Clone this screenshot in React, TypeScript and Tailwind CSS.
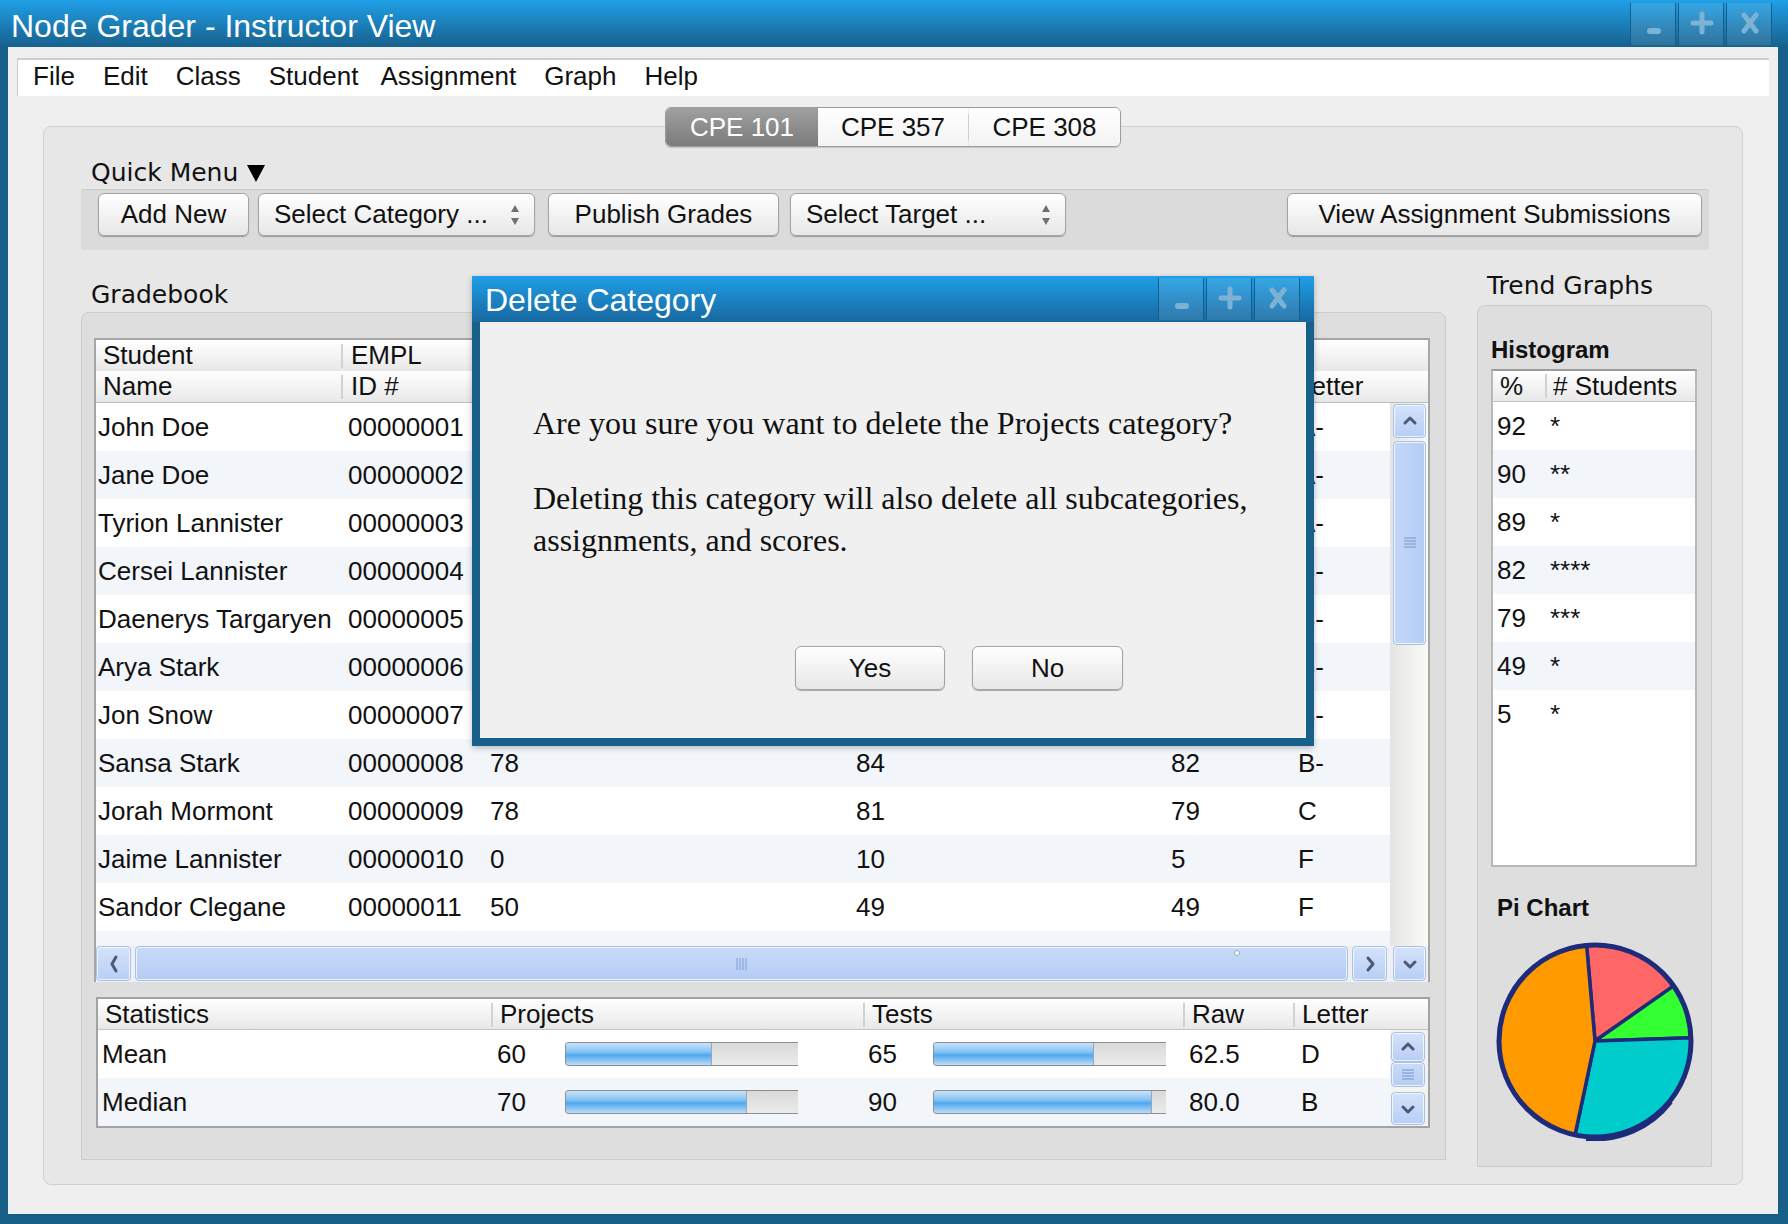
import type { ReactNode } from 'react'

// cells under the dialog are left blank; only name, id and letter show there
const STUDENTS = [
  ['John Doe', '00000001', '', '', '', 'A-'],
  ['Jane Doe', '00000002', '', '', '', 'A-'],
  ['Tyrion Lannister', '00000003', '', '', '', 'A-'],
  ['Cersei Lannister', '00000004', '', '', '', 'B-'],
  ['Daenerys Targaryen', '00000005', '', '', '', 'B-'],
  ['Arya Stark', '00000006', '', '', '', 'B-'],
  ['Jon Snow', '00000007', '', '', '', 'B-'],
  ['Sansa Stark', '00000008', '78', '84', '82', 'B-'],
  ['Jorah Mormont', '00000009', '78', '81', '79', 'C'],
  ['Jaime Lannister', '00000010', '0', '10', '5', 'F'],
  ['Sandor Clegane', '00000011', '50', '49', '49', 'F'],
]

const HISTOGRAM = [
  ['92', '*'],
  ['90', '**'],
  ['89', '*'],
  ['82', '****'],
  ['79', '***'],
  ['49', '*'],
  ['5', '*'],
]

const STATS = [
  { name: 'Mean', proj: '60', projPct: 63, test: '65', testPct: 69, raw: '62.5', letter: 'D' },
  { name: 'Median', proj: '70', projPct: 78, test: '90', testPct: 94, raw: '80.0', letter: 'B' },
]

function WinControls() {
  return (
    <div className="flex gap-[2px]">
      <div className="h-[42px] w-[46px] border-x border-[#155d8c] bg-white/10">
        <svg width="46" height="42" viewBox="0 0 46 42">
          <rect x="16" y="25" width="14" height="6" rx="3" fill="#7cb2d4" />
        </svg>
      </div>
      <div className="h-[42px] w-[46px] border-x border-[#155d8c] bg-white/10">
        <svg width="46" height="42" viewBox="0 0 46 42">
          <path d="M23 11 V29 M14 20 H32" stroke="#7cb2d4" strokeWidth="5" strokeLinecap="round" />
        </svg>
      </div>
      <div className="h-[42px] w-[46px] border-x border-[#155d8c] bg-white/10">
        <svg width="46" height="42" viewBox="0 0 46 42">
          <path d="M17 12 L29 28 M29 12 L17 28" stroke="#7cb2d4" strokeWidth="5" strokeLinecap="round" />
        </svg>
      </div>
    </div>
  )
}

function Btn({ children, className }: { children: ReactNode; className: string }) {
  return (
    <div
      className={`flex h-[43px] items-center justify-center rounded-[6px] border border-[#a3a3a3] bg-gradient-to-b from-white to-[#e7e7e7] text-[26px] shadow-[0_1px_1px_rgba(0,0,0,0.3)] ${className}`}
    >
      {children}
    </div>
  )
}

function SelectBox({ label, className }: { label: string; className: string }) {
  return (
    <div
      className={`flex h-[43px] items-center justify-between rounded-[6px] border border-[#a3a3a3] bg-gradient-to-b from-white to-[#e7e7e7] pl-[15px] pr-[14px] text-[26px] shadow-[0_1px_1px_rgba(0,0,0,0.3)] ${className}`}
    >
      <span>{label}</span>
      <svg width="10" height="22" viewBox="0 0 10 22">
        <path d="M5 1 L9 8 L1 8 Z M1 14 L9 14 L5 21 Z" fill="#707070" />
      </svg>
    </div>
  )
}

function ScrollBtn({ dir, className }: { dir: 'up' | 'down' | 'left' | 'right'; className: string }) {
  const paths = {
    up: 'M5 12 L10 7 L15 12',
    down: 'M5 8 L10 13 L15 8',
    left: 'M12 3 L8 10 L12 17',
    right: 'M8 4 L13 10 L8 16',
  }
  return (
    <div
      className={`flex items-center justify-center rounded-[4px] border border-[#a8c0ea] bg-gradient-to-b from-[#d4e3fb] to-[#b8cef5] shadow-[inset_0_0_0_1px_rgba(255,255,255,0.75)] ${className}`}
    >
      <svg width="20" height="20" viewBox="0 0 20 20">
        <path d={paths[dir]} fill="none" stroke="#4c5a78" strokeWidth="3" strokeLinecap="round" strokeLinejoin="round" />
      </svg>
    </div>
  )
}

function HeadSep() {
  return <span className="h-[24px] w-[2px] shrink-0 bg-[#d2d2d2]" />
}

function Bar({ pct }: { pct: number }) {
  return (
    <div className="flex h-[24px] w-[233px] overflow-hidden rounded-l-[4px] border-y border-l border-[#8f8f8f] bg-gradient-to-b from-[#d9d9d9] to-[#ebebeb]">
      <div
        className="h-full border-r border-[#9aa6b3] bg-[linear-gradient(to_bottom,#c6e1fb,#86c4f4_40%,#4ea8ee_55%,#bcdcfa)]"
        style={{ width: `${pct}%` }}
      />
    </div>
  )
}

function PieChart() {
  return (
    <svg width="200" height="200" viewBox="0 0 200 200">
      <path d="M100 100 L91.63 4.37 A96 96 0 0 1 178.64 44.94 Z" fill="#ff6666" stroke="#1e2b7a" strokeWidth="3.5" strokeLinejoin="round" />
      <path d="M100 100 L178.64 44.94 A96 96 0 0 1 195.94 96.65 Z" fill="#33ff33" stroke="#1e2b7a" strokeWidth="3.5" strokeLinejoin="round" />
      <path d="M100 100 L195.94 96.65 A96 96 0 0 1 80.04 193.9 Z" fill="#00cccc" stroke="#1e2b7a" strokeWidth="3.5" strokeLinejoin="round" />
      <path d="M100 100 L80.04 193.9 A96 96 0 0 1 91.63 4.37 Z" fill="#ff9900" stroke="#1e2b7a" strokeWidth="3.5" strokeLinejoin="round" />
      <circle cx="100" cy="100" r="96" fill="none" stroke="#1e2b7a" strokeWidth="5" />
      <path d="M175 160 A96 96 0 0 1 90 197" fill="none" stroke="#1e2b7a" strokeWidth="4" transform="translate(1 1)" />
    </svg>
  )
}

export default function App() {
  return (
    <div className="relative flex h-[1224px] w-[1788px] flex-col overflow-hidden bg-[#185f87] font-['Liberation_Sans',Arial,sans-serif] text-[#111]">
      {/* Title bar */}
      <div className="flex h-[47px] shrink-0 items-start bg-gradient-to-b from-[#1fa0e8] to-[#17618e]">
        <span className="pl-[11px] pt-[7px] text-[32px] leading-[38px] text-white">Node Grader - Instructor View</span>
        <div className="ml-auto mr-[16px] mt-[3px]">
          <WinControls />
        </div>
      </div>

      <div className="mb-[10px] ml-[8px] mr-[10px] flex flex-1 flex-col bg-[#efefef]">
        {/* Menu bar */}
        <div className="mx-[9px] mt-[11px] flex h-[38px] shrink-0 items-start gap-[28px] border-t-2 border-l border-[#cdcdcd] bg-white pl-[15px] text-[26px] leading-[32px]">
          <span>File</span>
          <span>Edit</span>
          <span>Class</span>
          <span>Student</span>
          <span className="-ml-[6px]">Assignment</span>
          <span>Graph</span>
          <span>Help</span>
        </div>

        {/* Class tabs */}
        <div className="relative z-10 mt-[11px] flex justify-center">
          <div className="flex h-[40px] overflow-hidden rounded-[6px] border border-[#9d9d9d] text-[26px] shadow-[0_1px_1px_rgba(0,0,0,0.15)]">
            <div className="flex w-[152px] items-center justify-center bg-gradient-to-b from-[#a0a0a0] to-[#7b7b7b] text-white">CPE 101</div>
            <div className="flex w-[150px] items-center justify-center bg-gradient-to-b from-white to-[#f3f3f3]">CPE 357</div>
            <div className="my-[6px] w-px bg-[#cfcfcf]" />
            <div className="flex w-[151px] items-center justify-center bg-gradient-to-b from-white to-[#f3f3f3]">CPE 308</div>
          </div>
        </div>

        {/* Tab panel */}
        <div className="mx-[35px] -mt-[21px] flex h-[1059px] flex-col rounded-[8px] border border-[#d0d0d0] bg-[#e7e7e7] pt-[30px]">
          <div className="ml-[47px] flex h-[32px] items-center gap-[9px] font-['DejaVu_Sans',sans-serif] text-[25px]">
            <span>Quick Menu</span>
            <svg width="18" height="18" viewBox="0 0 18 18">
              <path d="M0 1 H18 L9 18 Z" fill="#000" />
            </svg>
          </div>

          {/* Toolbar */}
          <div className="ml-[37px] mr-[33px] flex h-[61px] items-start rounded-[3px] border-t border-[#c8c8c8] bg-[#dbdbdb] pl-[17px] pr-[7px] pt-[3px]">
            <Btn className="w-[151px]">Add New</Btn>
            <SelectBox label="Select Category ..." className="ml-[9px] w-[277px]" />
            <Btn className="ml-[13px] w-[231px]">Publish Grades</Btn>
            <SelectBox label="Select Target ..." className="ml-[11px] w-[276px]" />
            <Btn className="ml-auto w-[415px]">View Assignment Submissions</Btn>
          </div>

          <div className="ml-[37px] mr-[30px] flex gap-[31px]">
            {/* Gradebook column */}
            <div className="flex w-[1365px] flex-col">
              <div className="mt-[29px] h-[32px] pl-[10px] font-['DejaVu_Sans',sans-serif] text-[25px] leading-[32px]">Gradebook</div>
              <div className="mt-[1px] flex h-[848px] flex-col rounded-t-[8px] border border-[#cbcbcb] bg-[#dedede] pl-[12px] pr-[15px] pt-[25px]">
                {/* Gradebook table */}
                <div className="flex flex-col border-x-2 border-t-2 border-[#a6a6a6] bg-white text-[26px]">
                  <div className="border-b border-[#bdbdbd]">
                    <div className="grid h-[31px] grid-cols-[245px_141px_366px_315px_127px_1fr] bg-gradient-to-b from-white to-[#e8e8e8] leading-[31px]">
                      <div className="pl-[7px]">Student</div>
                      <div className="flex items-center"><HeadSep /><span className="pl-[8px]">EMPL</span></div>
                      <div />
                      <div />
                      <div />
                      <div />
                    </div>
                    <div className="grid h-[31px] grid-cols-[245px_141px_366px_315px_127px_1fr] bg-gradient-to-b from-white to-[#e8e8e8] leading-[31px]">
                      <div className="pl-[7px]">Name</div>
                      <div className="flex items-center"><HeadSep /><span className="pl-[8px]">ID #</span></div>
                      <div />
                      <div />
                      <div />
                      <div className="flex items-center"><span className="pl-[7px]">Letter</span></div>
                    </div>
                  </div>
                  <div className="flex h-[543px]">
                    <div className="flex-1 overflow-hidden">
                      {STUDENTS.map((s, i) => (
                        <div
                          key={s[1]}
                          className={`grid h-[48px] grid-cols-[250px_142px_366px_315px_127px_1fr] items-center pl-[2px] ${i % 2 ? 'bg-[#f2f5fa]' : 'bg-white'}`}
                        >
                          {s.map((c, j) => (
                            <span key={j}>{c}</span>
                          ))}
                        </div>
                      ))}
                      <div className="h-[16px] bg-[#f2f5fa]" />
                    </div>
                    <div className="flex w-[38px] flex-col bg-gradient-to-r from-[#e4e4e4] to-[#fafaf5] pl-[3px] pr-[2px] pt-[1px]">
                      <ScrollBtn dir="up" className="h-[34px]" />
                      <div className="mt-[3px] flex h-[204px] items-center justify-center rounded-[4px] border border-[#a8c0ea] bg-gradient-to-r from-[#c3d7f8] to-[#b5cdf5] shadow-[inset_0_0_0_1px_rgba(255,255,255,0.75)]">
                        <svg width="14" height="14" viewBox="0 0 14 14">
                          <path d="M1 2 H13 M1 5 H13 M1 8 H13 M1 11 H13" stroke="#8fa9da" strokeWidth="1.3" />
                        </svg>
                      </div>
                    </div>
                  </div>
                  <div className="flex h-[36px] items-stretch bg-[#eef0f3] pb-[1px]">
                    <ScrollBtn dir="left" className="w-[35px]" />
                    <div className="relative ml-[4px] flex flex-1 items-center justify-center rounded-[4px] border border-[#a8c0ea] bg-gradient-to-b from-[#c9dbf9] to-[#b3cbf4] shadow-[inset_0_0_0_1px_rgba(255,255,255,0.75)]">
                      <svg width="14" height="14" viewBox="0 0 14 14">
                        <path d="M2 1 V13 M5 1 V13 M8 1 V13 M11 1 V13" stroke="#8fa9da" strokeWidth="1.3" />
                      </svg>
                      <span className="absolute left-[1098px] top-[3px] h-[6px] w-[6px] rounded-full border border-[#9aa7b8] bg-white" />
                    </div>
                    <ScrollBtn dir="right" className="ml-[4px] w-[35px]" />
                    <ScrollBtn dir="down" className="ml-[6px] mr-[2px] w-[33px]" />
                  </div>
                </div>

                {/* Statistics table */}
                <div className="ml-[2px] mt-[15px] flex flex-col border-2 border-[#a3a3a3] bg-white text-[26px]">
                  <div className="grid h-[31px] grid-cols-[393px_372px_320px_110px_1fr] border-b border-[#c4c4c4] bg-gradient-to-b from-white to-[#e8e8e8] leading-[31px]">
                    <div className="pl-[7px]">Statistics</div>
                    <div className="flex items-center"><HeadSep /><span className="pl-[7px]">Projects</span></div>
                    <div className="flex items-center"><HeadSep /><span className="pl-[7px]">Tests</span></div>
                    <div className="flex items-center"><HeadSep /><span className="pl-[7px]">Raw</span></div>
                    <div className="flex items-center"><HeadSep /><span className="pl-[7px]">Letter</span></div>
                  </div>
                  <div className="flex h-[96px]">
                    <div className="flex-1">
                      {STATS.map((r, i) => (
                        <div
                          key={r.name}
                          className={`grid h-[48px] grid-cols-[393px_372px_320px_110px_1fr] items-center ${i % 2 ? 'bg-[#f2f5fa]' : 'bg-white'}`}
                        >
                          <span className="pl-[4px]">{r.name}</span>
                          <div className="flex items-center">
                            <span className="w-[74px] pl-[6px]">{r.proj}</span>
                            <Bar pct={r.projPct} />
                          </div>
                          <div className="flex items-center">
                            <span className="w-[70px] pl-[5px]">{r.test}</span>
                            <Bar pct={r.testPct} />
                          </div>
                          <span className="pl-[6px]">{r.raw}</span>
                          <span className="pl-[8px]">{r.letter}</span>
                        </div>
                      ))}
                    </div>
                    <div className="flex w-[38px] flex-col bg-[#f3f3f0] pl-[1px] pr-[3px] pt-[2px]">
                      <ScrollBtn dir="up" className="h-[30px]" />
                      <div className="flex h-[25px] items-center justify-center rounded-[4px] border border-[#a8c0ea] bg-gradient-to-b from-[#c9dbf9] to-[#b5cdf5] shadow-[inset_0_0_0_1px_rgba(255,255,255,0.75)]">
                        <svg width="14" height="14" viewBox="0 0 14 14">
                          <path d="M1 2 H13 M1 5 H13 M1 8 H13 M1 11 H13" stroke="#8fa9da" strokeWidth="1.3" />
                        </svg>
                      </div>
                      <ScrollBtn dir="down" className="mt-[5px] h-[33px]" />
                    </div>
                  </div>
                </div>
              </div>
            </div>

            {/* Trend graphs column */}
            <div className="flex w-[235px] flex-col">
              <div className="mt-[20px] h-[32px] pl-[10px] font-['DejaVu_Sans',sans-serif] text-[25px] leading-[32px]">Trend Graphs</div>
              <div className="mt-[3px] flex h-[862px] flex-col rounded-t-[8px] border border-[#cbcbcb] bg-[#dedede] pl-[13px] pt-[30px]">
                <div className="h-[28px] text-[24px] font-bold leading-[28px]">Histogram</div>
                <div className="mt-[5px] flex h-[498px] w-[206px] flex-col border-2 border-[#b8b8b8] border-t-[#9c9c9c] bg-white text-[26px]">
                  <div className="flex h-[31px] border-b border-[#c4c4c4] bg-gradient-to-b from-white to-[#e8e8e8] leading-[31px]">
                    <span className="w-[52px] pl-[7px]">%</span>
                    <div className="flex items-center"><HeadSep /><span className="pl-[6px]">#&nbsp;Students</span></div>
                  </div>
                  {HISTOGRAM.map((h, i) => (
                    <div key={h[0]} className={`flex h-[48px] items-center ${i % 2 ? 'bg-[#f2f5fa]' : 'bg-white'}`}>
                      <span className="w-[57px] pl-[4px]">{h[0]}</span>
                      <span>{h[1]}</span>
                    </div>
                  ))}
                </div>
                <div className="ml-[6px] mt-[27px] h-[28px] text-[24px] font-bold leading-[28px]">Pi Chart</div>
                <div className="ml-[4px] mt-[19px]">
                  <PieChart />
                </div>
              </div>
            </div>
          </div>
        </div>
      </div>

      {/* Delete Category dialog */}
      <div className="absolute left-[472px] top-[276px] flex h-[470px] w-[842px] flex-col bg-[#176089] shadow-[0_2px_6px_rgba(0,0,0,0.25)]">
        <div className="flex h-[46px] shrink-0 items-start bg-gradient-to-b from-[#1e9fe7] to-[#1868a0]">
          <span className="pl-[13px] pt-[4px] text-[32px] leading-[40px] text-white">Delete Category</span>
          <div className="ml-auto mr-[14px] mt-[2px]">
            <WinControls />
          </div>
        </div>
        <div className="mx-[8px] mb-[8px] flex flex-1 flex-col bg-[#f0f0f0] pl-[53px] pt-[80px] font-['Liberation_Serif','Times_New_Roman',serif] text-[32px] leading-[42px]">
          <p>Are you sure you want to delete the Projects category?</p>
          <p className="mt-[33px]">
            Deleting this category will also delete all subcategories,
            <br />
            assignments, and scores.
          </p>
          <div className="ml-[262px] mt-[85px] flex font-['Liberation_Sans',Arial,sans-serif]">
            <Btn className="h-[44px] w-[150px]">Yes</Btn>
            <Btn className="ml-[27px] h-[44px] w-[151px]">No</Btn>
          </div>
        </div>
      </div>
    </div>
  )
}
